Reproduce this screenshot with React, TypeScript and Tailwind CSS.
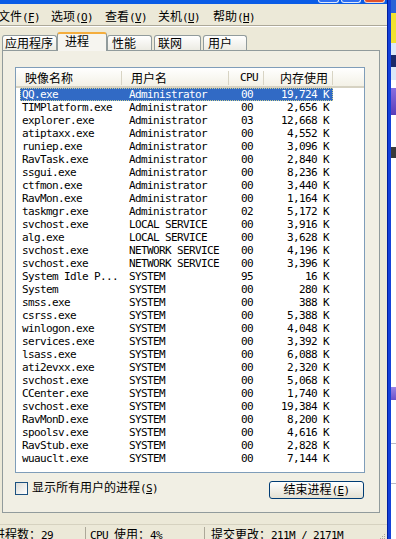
import React from 'react';

type Proc = [string, string, string, string];

const procs: Proc[] = [
  ['QQ.exe', 'Administrator', '00', '19,724 K'],
  ['TIMPlatform.exe', 'Administrator', '00', '2,656 K'],
  ['explorer.exe', 'Administrator', '03', '12,668 K'],
  ['atiptaxx.exe', 'Administrator', '00', '4,552 K'],
  ['runiep.exe', 'Administrator', '00', '3,096 K'],
  ['RavTask.exe', 'Administrator', '00', '2,840 K'],
  ['ssgui.exe', 'Administrator', '00', '8,236 K'],
  ['ctfmon.exe', 'Administrator', '00', '3,440 K'],
  ['RavMon.exe', 'Administrator', '00', '1,164 K'],
  ['taskmgr.exe', 'Administrator', '02', '5,172 K'],
  ['svchost.exe', 'LOCAL SERVICE', '00', '3,916 K'],
  ['alg.exe', 'LOCAL SERVICE', '00', '3,628 K'],
  ['svchost.exe', 'NETWORK SERVICE', '00', '4,196 K'],
  ['svchost.exe', 'NETWORK SERVICE', '00', '3,396 K'],
  ['System Idle P...', 'SYSTEM', '95', '16 K'],
  ['System', 'SYSTEM', '00', '280 K'],
  ['smss.exe', 'SYSTEM', '00', '388 K'],
  ['csrss.exe', 'SYSTEM', '00', '5,388 K'],
  ['winlogon.exe', 'SYSTEM', '00', '4,048 K'],
  ['services.exe', 'SYSTEM', '00', '3,392 K'],
  ['lsass.exe', 'SYSTEM', '00', '6,088 K'],
  ['ati2evxx.exe', 'SYSTEM', '00', '2,320 K'],
  ['svchost.exe', 'SYSTEM', '00', '5,068 K'],
  ['CCenter.exe', 'SYSTEM', '00', '1,740 K'],
  ['svchost.exe', 'SYSTEM', '00', '19,384 K'],
  ['RavMonD.exe', 'SYSTEM', '00', '8,200 K'],
  ['spoolsv.exe', 'SYSTEM', '00', '4,616 K'],
  ['RavStub.exe', 'SYSTEM', '00', '2,828 K'],
  ['wuauclt.exe', 'SYSTEM', '00', '7,144 K'],
];

// 宋体风格：中文用 Noto CJK，ASCII 用等宽 6px
const zh = "font-['Noto_Sans_CJK_SC','Noto_Sans_CJK_JP',sans-serif] text-[12px] leading-[14px]";
const mono = "font-['DejaVu_Sans_Mono','Liberation_Mono',monospace] text-[11px] leading-[14px] tracking-[-0.62px]";

const Acc = ({ text, k }: { text: string; k: string }) => (
  <span className="inline-flex items-baseline whitespace-nowrap leading-[14px]">
    <span className={zh}>{text}</span>
    <span className={mono}>
      (<span className="underline underline-offset-[1px]">{k}</span>)
    </span>
  </span>
);

const menus = [
  { t: '文件', k: 'F', w: 'w-[53px]' },
  { t: '选项', k: 'O', w: 'w-[54px]' },
  { t: '查看', k: 'V', w: 'w-[53px]' },
  { t: '关机', k: 'U', w: 'w-[55px]' },
  { t: '帮助', k: 'H', w: 'w-[50px]' },
];

const tabIdle =
  'h-[15px] rounded-t-[3px] border-x border-t border-[#919b9c] bg-gradient-to-b from-white to-[#ecebe3] leading-[14px]';

const App: React.FC = () => {
  return (
    <div className="flex h-[539px] w-[396px] overflow-hidden bg-white text-[12px] leading-[14px] text-black">
      {/* Окно диспетчера задач */}
      <div className="flex w-[387px] shrink-0 flex-col bg-[#ece9d8]">
        {/* title bar bottom */}
        <div className="flex h-[4px] shrink-0 bg-[#0a5ce6]">
          <div className="ml-[318px] h-[3px] w-[21px] rounded-b-[3px] border-x border-b border-[#dfe8fb] bg-[#2f6ff2]" />
          <div className="ml-[2px] h-[3px] w-[20px] rounded-b-[3px] border-x border-b border-[#dfe8fb] bg-[#2f6ff2]" />
          <div className="ml-[3px] h-[3px] w-[21px] rounded-b-[3px] border-x border-b border-[#f3d7cc] bg-[#e0512b]" />
        </div>

        {/* menu */}
        <div className="flex h-[21px] shrink-0 items-start overflow-hidden pt-[5px]">
          <div className="ml-[-2px] flex">
            {menus.map((m) => (
              <div key={m.k} className={`flex ${m.w}`}>
                <Acc text={m.t} k={m.k} />
              </div>
            ))}
          </div>
        </div>
        <div className="h-[2px] shrink-0 border-t border-b border-t-[#aca899] border-b-white" />

        {/* tabs */}
        <div className="relative z-10 flex h-[23px] shrink-0 items-end pl-[2px]">
          <div className={`w-[55px] pl-[2px] ${tabIdle}`}>
            <span className={zh}>应用程序</span>
          </div>
          <div className="-mb-px h-[19px] w-[50px] rounded-t-[3px] border-x border-t-2 border-x-[#919b9c] border-t-[#f4ad3d] bg-[#f6f5f0] pl-[7px] leading-[14px]">
            <span className={zh}>进程</span>
          </div>
          <div className={`w-[45px] pl-[4px] ${tabIdle}`}>
            <span className={zh}>性能</span>
          </div>
          <div className={`ml-[2px] w-[47px] pl-[3px] ${tabIdle}`}>
            <span className={zh}>联网</span>
          </div>
          <div className={`ml-[2px] w-[44px] pl-[4px] ${tabIdle}`}>
            <span className={zh}>用户</span>
          </div>
        </div>

        {/* tab panel */}
        <div className="ml-[2px] h-[463px] w-[378px] shrink-0 border border-[#919b9c] bg-[#f1efe4] pl-[12px] pt-[16px]">
          {/* list view */}
          <div className="h-[406px] w-[350px] overflow-hidden border border-[#7f9db9] bg-white">
            <div className="flex h-[20px] items-center border-b-2 border-[#d6d2c2] bg-gradient-to-b from-white to-[#f3f1e6] pt-px">
              <div className="flex h-[14px] w-[106px] items-center border-r border-[#d8d4c4] pl-[9px]">
                <span className={zh}>映像名称</span>
              </div>
              <div className="flex h-[14px] w-[107px] items-center border-r border-[#d8d4c4] pl-[9px]">
                <span className={zh}>用户名</span>
              </div>
              <div className="flex h-[14px] w-[35px] items-center border-r border-[#d8d4c4] pl-[11px]">
                <span className={mono}>CPU</span>
              </div>
              <div className="flex h-[14px] w-[69px] items-center justify-end border-r border-[#d8d4c4] pr-[4px]">
                <span className={zh}>内存使用</span>
              </div>
            </div>

            {procs.map((p, i) => (
              <div
                key={i}
                className={`ml-[4px] flex h-[13px] w-[313px] items-center whitespace-nowrap ${mono} leading-[13px] ${
                  i === 0 ? 'bg-[#316ac5] text-white outline-1 -outline-offset-1 outline-dotted outline-[#c9cf92]' : ''
                }`}
              >
                <div className="w-[102px] pl-[2px]">{p[0]}</div>
                <div className="w-[107px] pl-[7px]">{p[1]}</div>
                <div className="w-[35px] pl-[12px]">{p[2]}</div>
                <div className="w-[69px] pr-[4px] text-right">{p[3]}</div>
              </div>
            ))}
          </div>

          {/* bottom controls */}
          <div className="mt-[8px] flex w-[349px] items-start">
            <div className="flex h-[14px] items-center">
              <div className="h-[13px] w-[13px] border border-[#1c5180] bg-gradient-to-br from-[#dcdcd7] to-white" />
              <div className="ml-[4px] flex">
                <Acc text="显示所有用户的进程" k="S" />
              </div>
            </div>
            <button className="ml-auto flex h-[18px] w-[95px] items-center justify-center rounded-[3px] border border-[#003c74] bg-gradient-to-b from-white to-[#e4e1d3]">
              <Acc text="结束进程" k="E" />
            </button>
          </div>
        </div>

        {/* status bar */}
        <div className="mt-[11px] flex h-[22px] shrink-0 items-start border-t border-[#d6d2c0] pt-[2px]">
          <div className="flex h-[20px] w-[85px] overflow-hidden whitespace-nowrap">
            <div className="ml-[-7px] flex items-baseline">
              <span className={zh}>进程数：</span>
              <span className={mono}>29</span>
            </div>
          </div>
          <div className="flex h-[20px] w-[119px] items-baseline whitespace-nowrap border-l border-[#aca899] pl-[4px]">
            <span className={`${mono} whitespace-pre`}>CPU </span>
            <span className={zh}>使用：</span>
            <span className={mono}>4%</span>
          </div>
          <div className="flex h-[20px] flex-1 items-baseline whitespace-nowrap border-l border-[#aca899] pl-[6px]">
            <span className={zh}>提交更改：</span>
            <span className={`${mono} whitespace-pre`}>211M / 2171M</span>
            <svg className="ml-auto mr-px self-start mt-[7px]" width="6" height="6" viewBox="0 0 6 6">
              <rect x="4" y="0" width="1" height="1" fill="#aca899" />
              <rect x="2" y="2" width="1" height="1" fill="#aca899" />
              <rect x="4" y="2" width="1" height="1" fill="#aca899" />
              <rect x="0" y="4" width="1" height="1" fill="#aca899" />
              <rect x="2" y="4" width="1" height="1" fill="#aca899" />
              <rect x="4" y="4" width="1" height="1" fill="#aca899" />
            </svg>
          </div>
        </div>
      </div>

      {/* window frame */}
      <div className="w-[4px] shrink-0 border-l border-[#001d9e] bg-[#1441d8]" />

      {/* desktop */}
      <div className="flex flex-1 flex-col">
        <div className="h-[13px] bg-[#2a62d6]" />
        <div className="h-[30px] bg-[#f1e22e]" />
        <div className="h-[12px] bg-[#dbe8f8]" />
        <div className="h-[12px] bg-[#1b2a6a]" />
        <div className="h-[13px] bg-[#dbe8f8]" />
        <div className="h-[8px] bg-white" />
        <div className="h-[27px] bg-gradient-to-b from-[#8a6ee0] to-[#5a3cb8]" />
        <div className="h-[32px] bg-white" />
        <div className="h-[11px] bg-[#3a3a3a]" />
        <div className="h-[229px] bg-white" />
        <div className="h-[13px] bg-gradient-to-b from-[#9c84e6] to-[#6c50c8]" />
        <div className="h-[43px] bg-white" />
        <div className="h-px bg-[#b8b8c8]" />
        <div className="h-[39px] bg-white" />
        <div className="h-px bg-[#b8b8c8]" />
        <div className="flex-1 bg-white" />
      </div>
    </div>
  );
};

export default App;
